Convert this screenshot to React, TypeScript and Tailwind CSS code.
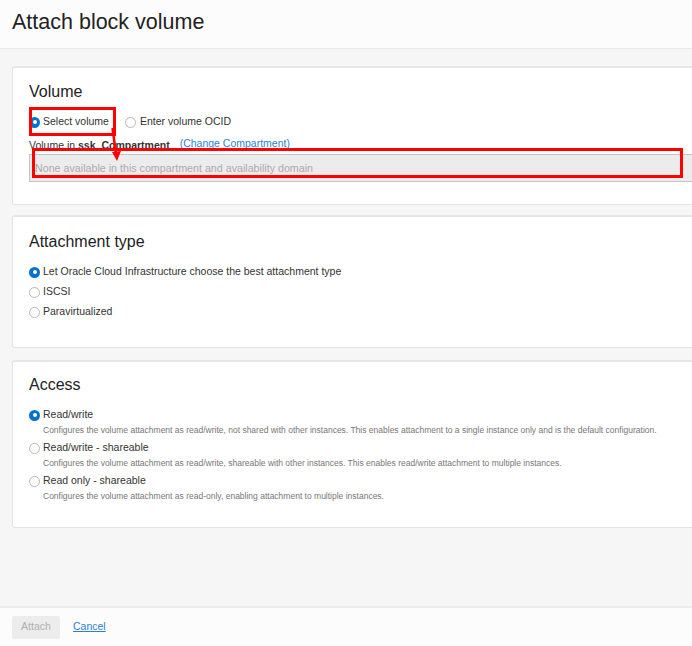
import React from "react";

const font = { fontFamily: '"Liberation Sans", Arial, sans-serif' };

function Radio({ checked }: { checked?: boolean }) {
  return checked ? (
    <span className="flex h-[11px] w-[11px] shrink-0 items-center justify-center rounded-full bg-[#0572ce]">
      <span className="h-[4px] w-[4px] rounded-full bg-white" />
    </span>
  ) : (
    <span className="block h-[11px] w-[11px] shrink-0 rounded-full border border-[#b8b8b8] bg-white" />
  );
}

function Card({ title, className, children }: { title: string; className: string; children: React.ReactNode }) {
  return (
    <section className={`-mr-8 rounded-[3px] border border-[#e3e3e3] border-t-2 border-t-[#e6e6e6] bg-white pl-[16px] pr-[16px] ${className}`}>
      <h2 className="text-[16px] leading-[20px] text-[#222]">{title}</h2>
      {children}
    </section>
  );
}

const access = [
  {
    label: "Read/write",
    desc: "Configures the volume attachment as read/write, not shared with other instances. This enables attachment to a single instance only and is the default configuration.",
    checked: true,
  },
  {
    label: "Read/write - shareable",
    desc: "Configures the volume attachment as read/write, shareable with other instances. This enables read/write attachment to multiple instances.",
  },
  {
    label: "Read only - shareable",
    desc: "Configures the volume attachment as read-only, enabling attachment to multiple instances.",
  },
];

export default function App() {
  return (
    <div className="relative flex h-[646px] w-[692px] flex-col overflow-hidden bg-[#f6f6f6] text-[#333]" style={font}>
      <header className="h-[49px] shrink-0 border-b border-[#e8e8e8] bg-[#fcfcfc] pl-[12px] pt-[9px]">
        <h1 className="text-[21.5px] leading-[26px] text-[#222]">Attach block volume</h1>
      </header>

      <main className="flex flex-1 flex-col pl-[12px] pt-[17px]">
        <Card title="Volume" className="h-[139px] pt-[14px]">
          <div className="mt-[10px] flex h-[20px] items-center text-[10.5px] text-[#333]">
            <Radio checked />
            <span className="ml-[3px]">Select volume</span>
            <span className="ml-[16px] flex">
              <Radio />
            </span>
            <span className="ml-[4px]">Enter volume OCID</span>
          </div>
          <div className="mt-[6px] flex h-[14px] items-center text-[10.5px] leading-[14px]">
            <span>
              Volume in <b className="font-bold">ssk_Compartment</b>
            </span>
            <a href="#" className="relative -top-[2px] ml-[10px] text-[#2d7fd6] underline">
              (Change Compartment)
            </a>
          </div>
          <div className="mt-[2px] flex h-[28px] items-center border border-[#c4c4c4] bg-[#ececec] pl-[5px] text-[10.7px] text-[#ababab]">
            None available in this compartment and availability domain
          </div>
        </Card>

        <Card title="Attachment type" className="mt-[10px] h-[133px] pt-[15px]">
          <div className="mt-[10px] flex flex-col text-[10.5px] text-[#333]">
            {["Let Oracle Cloud Infrastructure choose the best attachment type", "ISCSI", "Paravirtualized"].map((l, i) => (
              <label key={l} className="flex h-[20px] items-center gap-[3px]">
                <Radio checked={i === 0} />
                {l}
              </label>
            ))}
          </div>
        </Card>

        <Card title="Access" className="mt-[12px] h-[168px] pt-[13px]">
          <div className="mt-[12px] flex flex-col">
            {access.map((a) => (
              <div key={a.label} className="h-[33px]">
                <label className="flex h-[16px] items-center gap-[3px] text-[10.5px] text-[#333]">
                  <Radio checked={a.checked} />
                  {a.label}
                </label>
                <p className="pl-[14px] text-[8.5px] leading-[14px] text-[#777]">{a.desc}</p>
              </div>
            ))}
          </div>
        </Card>
      </main>

      <footer className="flex h-[40px] shrink-0 items-center border-t-2 border-[#ececec] bg-[#fcfcfc] pl-[12px]">
        <button className="h-[23px] w-[48px] rounded-[2px] bg-[#ececec] text-[10.5px] text-[#b0b0b0]">Attach</button>
        <a href="#" className="ml-[13px] text-[10.5px] text-[#2d7fd6] underline">
          Cancel
        </a>
      </footer>

      {/* annotation overlay */}
      <div className="pointer-events-none absolute left-[29px] top-[107px] h-[29px] w-[87px] border-[3px] border-[#ff0000]" />
      <div className="pointer-events-none absolute left-[32px] top-[148px] h-[30px] w-[651px] border-[3px] border-[#ff0000]" />
      <svg className="pointer-events-none absolute left-0 top-0" width="692" height="646">
        <line x1="112.5" y1="128" x2="116" y2="154" stroke="#ff0000" strokeWidth="2.5" />
        <polygon points="112,152 121,151 117,161" fill="#ff0000" />
      </svg>
    </div>
  );
}
